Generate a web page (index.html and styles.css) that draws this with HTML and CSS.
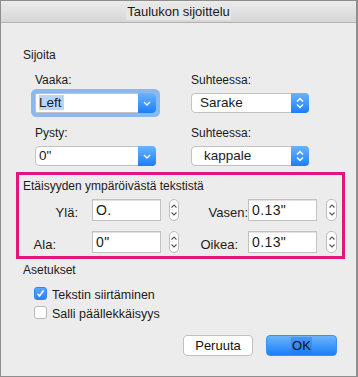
FILE: index.html
```html
<!DOCTYPE html>
<html>
  <head>
    <title>Taulukon sijoittelu</title>
    <link rel="stylesheet" href="styles.css">
  </head>
  <body>
    <div class="window">
      <div class="titlebar"><span class="title">Taulukon sijoittelu</span></div>

      <div class="content">
        <div class="section-label">Sijoita</div>

        <div class="position-grid">
          <div class="field">
            <div class="field-label">Vaaka:</div>
            <div class="select select-focus">
              <span class="select-value"><span class="selected-text">Left</span></span>
              <span class="select-btn">
                <svg width="8" height="5" viewBox="0 0 8 5"><path d="M1 1l3 3 3-3" fill="none" stroke="#fff" stroke-width="1.4"/></svg>
              </span>
            </div>
          </div>
          <div class="field">
            <div class="field-label">Suhteessa:</div>
            <div class="select">
              <span class="select-value popup-value">Sarake</span>
              <span class="select-btn">
                <svg width="8" height="12" viewBox="0 0 8 12"><path d="M1 4.5l3-3 3 3M1 7.5l3 3 3-3" fill="none" stroke="#fff" stroke-width="1.4"/></svg>
              </span>
            </div>
          </div>
          <div class="field">
            <div class="field-label">Pysty:</div>
            <div class="select">
              <span class="select-value">0"</span>
              <span class="select-btn">
                <svg width="8" height="5" viewBox="0 0 8 5"><path d="M1 1l3 3 3-3" fill="none" stroke="#fff" stroke-width="1.4"/></svg>
              </span>
            </div>
          </div>
          <div class="field">
            <div class="field-label">Suhteessa:</div>
            <div class="select">
              <span class="select-value popup-value popup-value-wide">kappale</span>
              <span class="select-btn">
                <svg width="8" height="12" viewBox="0 0 8 12"><path d="M1 4.5l3-3 3 3M1 7.5l3 3 3-3" fill="none" stroke="#fff" stroke-width="1.4"/></svg>
              </span>
            </div>
          </div>
        </div>

        <div class="distance-box">
          <div class="distance-title">Etäisyyden ympäröivästä tekstistä</div>

          <div class="dist-row">
            <span class="dist-label label-top">Ylä:</span>
            <span class="num-input">O.</span>
            <span class="stepper">
              <svg width="8" height="20" viewBox="0 0 8 20"><path d="M1.5 7.5l2.5-2.5 2.5 2.5M1.5 12.5l2.5 2.5 2.5-2.5" fill="none" stroke="#555" stroke-width="1.1"/></svg>
            </span>
            <span class="dist-label label-left">Vasen:</span>
            <span class="num-input">0.13"</span>
            <span class="stepper stepper-right">
              <svg width="8" height="20" viewBox="0 0 8 20"><path d="M1.5 7.5l2.5-2.5 2.5 2.5M1.5 12.5l2.5 2.5 2.5-2.5" fill="none" stroke="#555" stroke-width="1.1"/></svg>
            </span>
          </div>

          <div class="dist-row">
            <span class="dist-label label-bottom">Ala:</span>
            <span class="num-input">0"</span>
            <span class="stepper">
              <svg width="8" height="20" viewBox="0 0 8 20"><path d="M1.5 7.5l2.5-2.5 2.5 2.5M1.5 12.5l2.5 2.5 2.5-2.5" fill="none" stroke="#555" stroke-width="1.1"/></svg>
            </span>
            <span class="dist-label label-right">Oikea:</span>
            <span class="num-input">0.13"</span>
            <span class="stepper stepper-right">
              <svg width="8" height="20" viewBox="0 0 8 20"><path d="M1.5 7.5l2.5-2.5 2.5 2.5M1.5 12.5l2.5 2.5 2.5-2.5" fill="none" stroke="#555" stroke-width="1.1"/></svg>
            </span>
          </div>
        </div>

        <div class="section-label settings-label">Asetukset</div>

        <div class="checkbox-list">
          <label class="checkbox-row">
            <span class="checkbox checked">
              <svg width="9" height="9" viewBox="0 0 9 9"><path d="M1.5 4.8l2 2.2 4-5.5" fill="none" stroke="#fff" stroke-width="1.5"/></svg>
            </span>
            <span>Tekstin siirtäminen</span>
          </label>
          <label class="checkbox-row">
            <span class="checkbox"></span>
            <span>Salli päällekkäisyys</span>
          </label>
        </div>

        <div class="button-row">
          <button class="btn">Peruuta</button>
          <button class="btn btn-primary"><span class="btn-text">OK</span></button>
        </div>
      </div>
    </div>
  </body>
</html>
```

FILE: styles.css
```css
:root {
  --window-bg: #ececec;
  --text: #1b1b1b;
  --border: #bdbdbd;
  --blue-top: #6cb3fa;
  --blue-bottom: #1a7ffa;
  --highlight: #e0167e;
}

* {
  margin: 0;
  padding: 0;
  box-sizing: border-box;
}

body {
  width: 358px;
  height: 377px;
  font-family: "Liberation Sans", Arial, sans-serif;
  font-size: 12px;
  color: var(--text);
  background: #ffffff;
}

.window {
  width: 358px;
  height: 377px;
  border: 1px solid #8e8e8e;
  border-right-width: 2px;
  background: var(--window-bg);
}

.titlebar {
  height: 22px;
  border-bottom: 1px solid #b3b3b3;
  background: linear-gradient(#ebebeb, #d6d6d6);
  display: flex;
  justify-content: center;
  align-items: center;
}

.title {
  font-size: 13px;
  line-height: 16px;
  padding: 0 1px;
  background: #e6e6e6;
  color: #1a1a1a;
}

.content {
  padding: 0 15px;
}

.section-label {
  line-height: 14px;
  padding-left: 7px;
  margin-top: 25px;
}

/* position selects */
.position-grid {
  display: grid;
  grid-template-columns: 121px 118px;
  column-gap: 35px;
  row-gap: 13px;
  margin-top: 11px;
  margin-left: 19px;
}

.field-label {
  line-height: 14px;
  margin-bottom: 6px;
}

.select {
  display: flex;
  height: 20px;
  background: #ffffff;
  border: 1px solid #c3c3c3;
  border-radius: 4px;
}

.select-focus {
  border-radius: 2px;
  box-shadow: 0 0 0 4px #8ab8f1;
}

.select-value {
  flex: 1;
  padding-left: 3px;
  font-size: 13.5px;
  line-height: 18px;
}

.popup-value {
  padding-left: 8px;
}

.popup-value-wide {
  padding-left: 12px;
}

.selected-text {
  background: #b6d6fc;
  padding-right: 2px;
}

.select-btn {
  width: 18px;
  margin: -1px -1px -1px 0;
  border-radius: 0 4px 4px 0;
  background: linear-gradient(var(--blue-top), var(--blue-bottom));
  display: flex;
  align-items: center;
  justify-content: center;
}

/* distance box */
.distance-box {
  margin-top: 6px;
  width: 329px;
  height: 87px;
  border: 3px solid var(--highlight);
  padding: 4px 0 0 0;
}

.distance-title {
  line-height: 14px;
  padding-left: 4px;
  margin-bottom: 6px;
}

.dist-row {
  display: flex;
  align-items: center;
  height: 22px;
}

.dist-row + .dist-row {
  margin-top: 10px;
}

.dist-label {
  width: 73px;
  text-align: right;
  line-height: 14px;
  padding-top: 5px;
  font-size: 13px;
}

.label-top {
  padding-right: 14px;
}

.label-bottom {
  padding-right: 36px;
}

.label-left {
  width: 69px;
  margin-right: -2px;
}

.label-right {
  width: 69px;
  padding-right: 10px;
}

.label-left + .num-input {
  margin-left: 2px;
}

.num-input {
  width: 69px;
  height: 22px;
  background: #ffffff;
  border: 1px solid #c2c2c2;
  box-shadow: inset 0 1px 0 #e2e2e2;
  padding-left: 3px;
  font-size: 14px;
  line-height: 20px;
  letter-spacing: 0.4px;
}

.stepper {
  width: 10px;
  height: 22px;
  margin-left: 8px;
  background: #ffffff;
  border: 1px solid var(--border);
  border-radius: 5px;
  display: flex;
  justify-content: center;
  align-items: center;
}

.stepper-right {
  width: 11px;
  margin-left: 9px;
}

/* settings */
.settings-label {
  margin-top: 4px;
}

.checkbox-list {
  margin-top: 9px;
  margin-left: 18px;
  display: flex;
  flex-direction: column;
  gap: 5px;
}

.checkbox-row {
  display: flex;
  align-items: center;
  gap: 5px;
  height: 14px;
  font-size: 12.5px;
}

.checkbox-row span:last-child {
  padding-top: 3px;
}

.checkbox {
  width: 13px;
  height: 13px;
  border: 1px solid #b8b8b8;
  border-radius: 3px;
  background: #ffffff;
  display: flex;
  align-items: center;
  justify-content: center;
}

.checkbox.checked {
  border-color: #2f86f3;
  background: linear-gradient(#5ea8f9, #2a83f7);
}

/* buttons */
.button-row {
  display: flex;
  justify-content: flex-end;
  gap: 13px;
  margin-top: 16px;
  padding-right: 4px;
}

.btn {
  width: 70px;
  height: 21px;
  border: 1px solid #c0c0c0;
  border-radius: 4px;
  background: #ffffff;
  font-family: "Liberation Sans", Arial, sans-serif;
  font-size: 13px;
  color: #111111;
  cursor: pointer;
}

.btn-primary {
  width: 71px;
  border-color: #3b8ef5;
  background: linear-gradient(var(--blue-top), var(--blue-bottom));
}

.btn-text {
  background: rgba(40, 120, 230, 0.45);
  padding: 1px 1px;
}
```
